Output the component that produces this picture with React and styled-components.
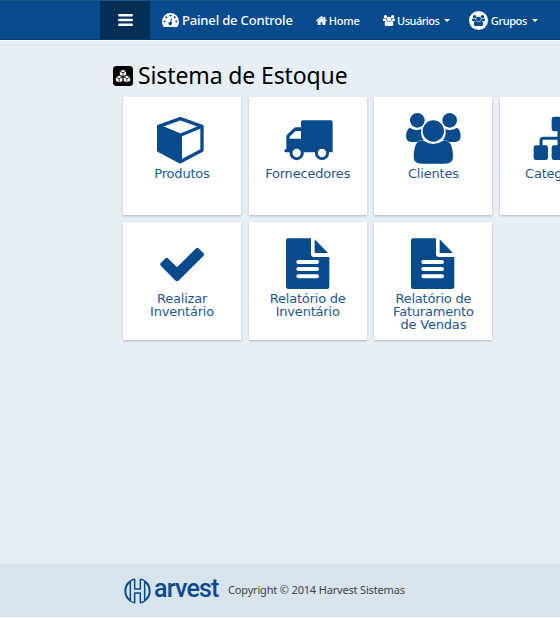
import React from "react";
import styled, { createGlobalStyle } from "styled-components";

const Global = createGlobalStyle`
  * { box-sizing: border-box; }
  html, body { margin: 0; background: #e7eef5; overflow: hidden; }
`;
const Page = styled.div`
  width: 560px;
  height: 618px;
  overflow: hidden;
  display: flex;
  flex-direction: column;
  background: #e7eef5;
  font-family: "Noto Sans", sans-serif;
`;
const Navbar = styled.nav`
  flex: none;
  height: 40px;
  padding-left: 100px;
  display: flex;
  align-items: stretch;
  color: #fff;
  background: #074b8c;
  border-top: 1px solid #1a5485;
  border-bottom: 1px solid #063a78;
  box-shadow: 0 1px 0 #fff;
`;
const MenuButton = styled.button`
  width: 50px;
  padding: 0 0 0 1px;
  border: 0;
  background: #052f57;
  display: flex;
  align-items: center;
  justify-content: center;
`;
const NavItem = styled.a`
  display: flex;
  align-items: center;
  white-space: nowrap;
  margin-left: ${(p) => p.$left}px;
  gap: ${(p) => p.$gap || 3}px;
  font-size: ${(p) => p.$size || 11}px;
  font-weight: 500;
  letter-spacing: ${(p) => p.$spacing || 0}px;
`;
const Caret = styled.i`
  border: 3px solid transparent;
  border-top-color: #fff;
  border-bottom: 0;
  margin-left: 2px;
`;
const Avatar = styled.span`
  width: 19px;
  height: 19px;
  border-radius: 50%;
  background: #fff;
  color: #074b8c;
  display: flex;
  align-items: center;
  justify-content: center;
`;
const Main = styled.main`
  flex: 1;
  padding: 22px 0 0 113px;
`;
const Title = styled.h1`
  margin: 0;
  height: 28px;
  display: flex;
  align-items: center;
  gap: 5px;
  color: #000;
  font-size: 23px;
  line-height: 26px;
  font-weight: 400;
  letter-spacing: -0.12px;
  white-space: nowrap;
`;
const TitleText = styled.span`
  margin-bottom: 2px;
`;
const Grid = styled.section`
  margin: 7px 0 0 10px;
  display: grid;
  grid-template-columns: repeat(4, 118px);
  grid-auto-rows: 117.7px;
  gap: 7.7px;
`;
const Card = styled.a`
  background: #fff;
  color: #074b8c;
  box-shadow: 0 1px 2px rgba(60, 80, 100, 0.35);
  display: flex;
  flex-direction: column;
  align-items: center;
`;
const CardArt = styled.svg`
  flex: none;
  width: 118px;
  height: 71px;
`;
const Label = styled.span`
  color: #24578f;
  text-align: center;
  white-space: pre-line;
  font: 13px/12.6px "DejaVu Sans", sans-serif;
  letter-spacing: -0.2px;
`;
const Footer = styled.footer`
  flex: none;
  height: 54px;
  padding-left: 124px;
  border-bottom: 1px solid #f2f6fa;
  background: #d8e3ec;
  display: flex;
  align-items: center;
`;
const Brand = styled.span`
  width: 63px;
  margin: 0 0 3px 3px;
  color: #074b8c;
  font: 500 25px/26px Roboto, sans-serif;
  letter-spacing: -0.8px;
  white-space: nowrap;
`;
const Copyright = styled.span`
  margin: 0 0 2px 11px;
  color: #444;
  font-size: 11px;
  letter-spacing: -0.17px;
  white-space: nowrap;
`;

const peopleShapes = (
  <g fill="currentColor">
    <circle cx="142" cy="91" r="22" />
    <circle cx="239" cy="91" r="22" />
    <path d="M119 113q18 12 35 4q-4 20 7 33q-13 0-20 6h-19q-14-2-14-18q0-17 11-25z" />
    <path d="M261 113q-18 12-35 4q4 20-7 33q13 0 20 6h19q14-2 14-18q0-17-11-25z" />
    <circle cx="190" cy="123" r="32" />
    <path d="M158 151q32 22 64 0q16-1 23 19q4 14 4 30q0 21-24 21h-70q-24 0-24-21q0-16 4-30q7-20 23-19z" />
  </g>
);

const People = ({ w, h }) => (
  <svg width={w} height={h} viewBox="108 68 164 154" preserveAspectRatio="none">{peopleShapes}</svg>
);

const fileShapes = (
  <g>
    <path fill="currentColor" d="M129 70h69v47q0 9 9 9h46v89q0 7-7 7H130q-7 0-7-7V77q0-7 6-7zM209 73l40 41h-40z" />
    <path stroke="#fff" strokeWidth="12" strokeLinecap="round" d="M160 141h56M160 162h56M160 184h56" />
  </g>
);

const cards = [
  {
    label: "Produtos", x: 24,
    art: (
      <g stroke="currentColor" strokeWidth="10" strokeLinejoin="round" fill="none">
        <path d="M196 86l65 23v72l-65 34l-65-34v-72z" />
        <path d="M131 109l65 27l65-27M196 136v79" />
        <path fill="currentColor" d="M131 109l65 27v79l-65-34z" />
      </g>
    ),
  },
  {
    label: "Fornecedores", x: 12,
    art: (
      <g>
        <path fill="currentColor" fillRule="evenodd" d="M173 91h85q5 0 5 5v91H123q-5 0-5-5t6-4v-37q0-5 4-9l17-16q4-4 9-4h14V96q0-5 5-5zM134 146h34v-23h-14q-3 0-5 2l-15 15z" />
        <g fill="#fff" stroke="currentColor" strokeWidth="9"><circle cx="155" cy="189" r="17" /><circle cx="231" cy="189" r="17" /></g>
      </g>
    ),
  },
  { label: "Clientes", x: 12, art: peopleShapes },
  {
    label: "Categorias", x: 390,
    art: (
      <g fill="currentColor">
        <rect x="545" y="80" width="44" height="44" rx="7" />
        <rect x="491" y="166" width="43" height="44" rx="7" />
        <rect x="545" y="166" width="44" height="44" rx="7" />
        <rect x="600" y="166" width="43" height="44" rx="7" />
        <path fill="none" stroke="currentColor" strokeWidth="9" d="M567 120v50M513 170v-18q0-7 7-7h94q7 0 7 7v18" />
      </g>
    ),
  },
  {
    label: "Realizar\nInventário", x: 24,
    art: <path fill="currentColor" d="M138 143l12-12q5-5 10 0l26 26l56-56q5-5 10 0l13 13q4 4 0 9l-73 73q-6 6-12 0l-42-43q-5-5 0-10z" />,
  },
  { label: "Relatório de\nInventário", x: 12, art: fileShapes },
  { label: "Relatório de\nFaturamento\nde Vendas", x: 12, art: fileShapes },
];

const MenuIcon = () => (
  <svg width="15" height="12" viewBox="0 0 15 12">
    <path stroke="#fff" strokeWidth="2.4" strokeLinecap="round" d="M1.2 1.3h12.6M1.2 6h12.6M1.2 10.7h12.6" />
  </svg>
);
const GaugeIcon = () => (
  <svg width="17" height="14" viewBox="0 0 17 14">
    <path fill="#fff" d="M8.5 0A8.5 8.5 0 0 1 17 8.5c0 2-.6 3.6-1.4 4.9q-.3.5-.9.5H2.3q-.6 0-.9-.5A9 9 0 0 1 0 8.500A8.500 8.500 0 0 1 8.500 0z" />
    <g fill="#074b8c">
      <circle cx="2.600" cy="8.500" r="1.100" /><circle cx="4.300" cy="4.300" r="1.100" />
      <circle cx="8.500" cy="2.500" r="1.100" /><circle cx="12.700" cy="4.300" r="1.100" />
      <circle cx="14.400" cy="8.500" r="1.100" /><circle cx="8.300" cy="10.500" r="1.800" />
    </g>
    <path stroke="#074b8c" strokeWidth="1" strokeLinecap="round" d="M8.500 10l1-4.200" />
  </svg>
);
const HomeIcon = () => (
  <svg width="11" height="9" viewBox="0 0 11 9" fill="#fff">
    <path d="M5.500 1.800l3.900 3.400V8.500q0 .5-.5.500H6.400V6.300H4.600V9H2.100q-.5 0-.5-.5V5.200z" />
    <path fill="none" stroke="#fff" strokeWidth="1.200" d="M.4 5l5.100-4.300L10.600 5M8.700 .8v2.500" />
  </svg>
);
const CubesIcon = () => (
  <svg width="20" height="20" viewBox="0 0 20 20">
    <rect width="20" height="20" rx="3.500" fill="#000" />
    <g fill="#fff" stroke="#000" strokeWidth=".8" strokeLinejoin="round">
      <path d="M10 3.500l3.600 1.600v4L10 10.700L6.400 9.100v-4z" />
      <path d="M6.200 9.300l3.800 1.600v4.200l-3.800 1.700l-3.800-1.700v-4.200zM13.800 9.300l3.800 1.600v4.200l-3.800 1.700L10 15.100v-4.200z" />
      <path fill="none" d="M6.400 5.100L10 6.800l3.600-1.700M10 6.800v3.900M2.400 10.900l3.800 1.700L10 10.900M6.200 12.600v4.200M10 10.900l3.800 1.700l3.800-1.700M13.800 12.600v4.200" />
    </g>
  </svg>
);
const HarvestMark = () => (
  <svg width="27" height="26" viewBox="0 0 81 78" fill="none" stroke="#074b8c">
    <path strokeWidth="6" d="M19 10Q4 20 4 39t15 29M62 10q15 10 15 29T62 68" />
    <path strokeWidth="4.500" strokeLinejoin="round" d="M19 9v60M62 9v60M19 9q7-5 13-5v29h17V4q7 0 13 5M19 69q7 5 13 5V45h17v29q7 0 13-5" />
  </svg>
);

export default function App() {
  return (
    <Page>
      <Global />
      <Navbar>
        <MenuButton aria-label="Menu"><MenuIcon /></MenuButton>
        <NavItem $left={12} $size={13} $spacing={-0.17}><GaugeIcon />Painel de Controle</NavItem>
        <NavItem $left={23} $gap={2} $spacing={-0.2}><HomeIcon />Home</NavItem>
        <NavItem $left={23} $gap={2.5} $spacing={-0.52}><People w={12} h={11} />Usuários<Caret /></NavItem>
        <NavItem $left={19} $spacing={-0.4}><Avatar><People w={13} h={11} /></Avatar>Grupos<Caret /></NavItem>
      </Navbar>
      <Main>
        <Title><CubesIcon /><TitleText>Sistema de Estoque</TitleText></Title>
        <Grid>
          {cards.map((c) => (
            <Card key={c.label}>
              <CardArt viewBox={`${c.x} 21 354 213`}>{c.art}</CardArt>
              <Label>{c.label}</Label>
            </Card>
          ))}
        </Grid>
      </Main>
      <Footer>
        <HarvestMark />
        <Brand>arvest</Brand>
        <Copyright>Copyright © 2014 Harvest Sistemas</Copyright>
      </Footer>
    </Page>
  );
}
